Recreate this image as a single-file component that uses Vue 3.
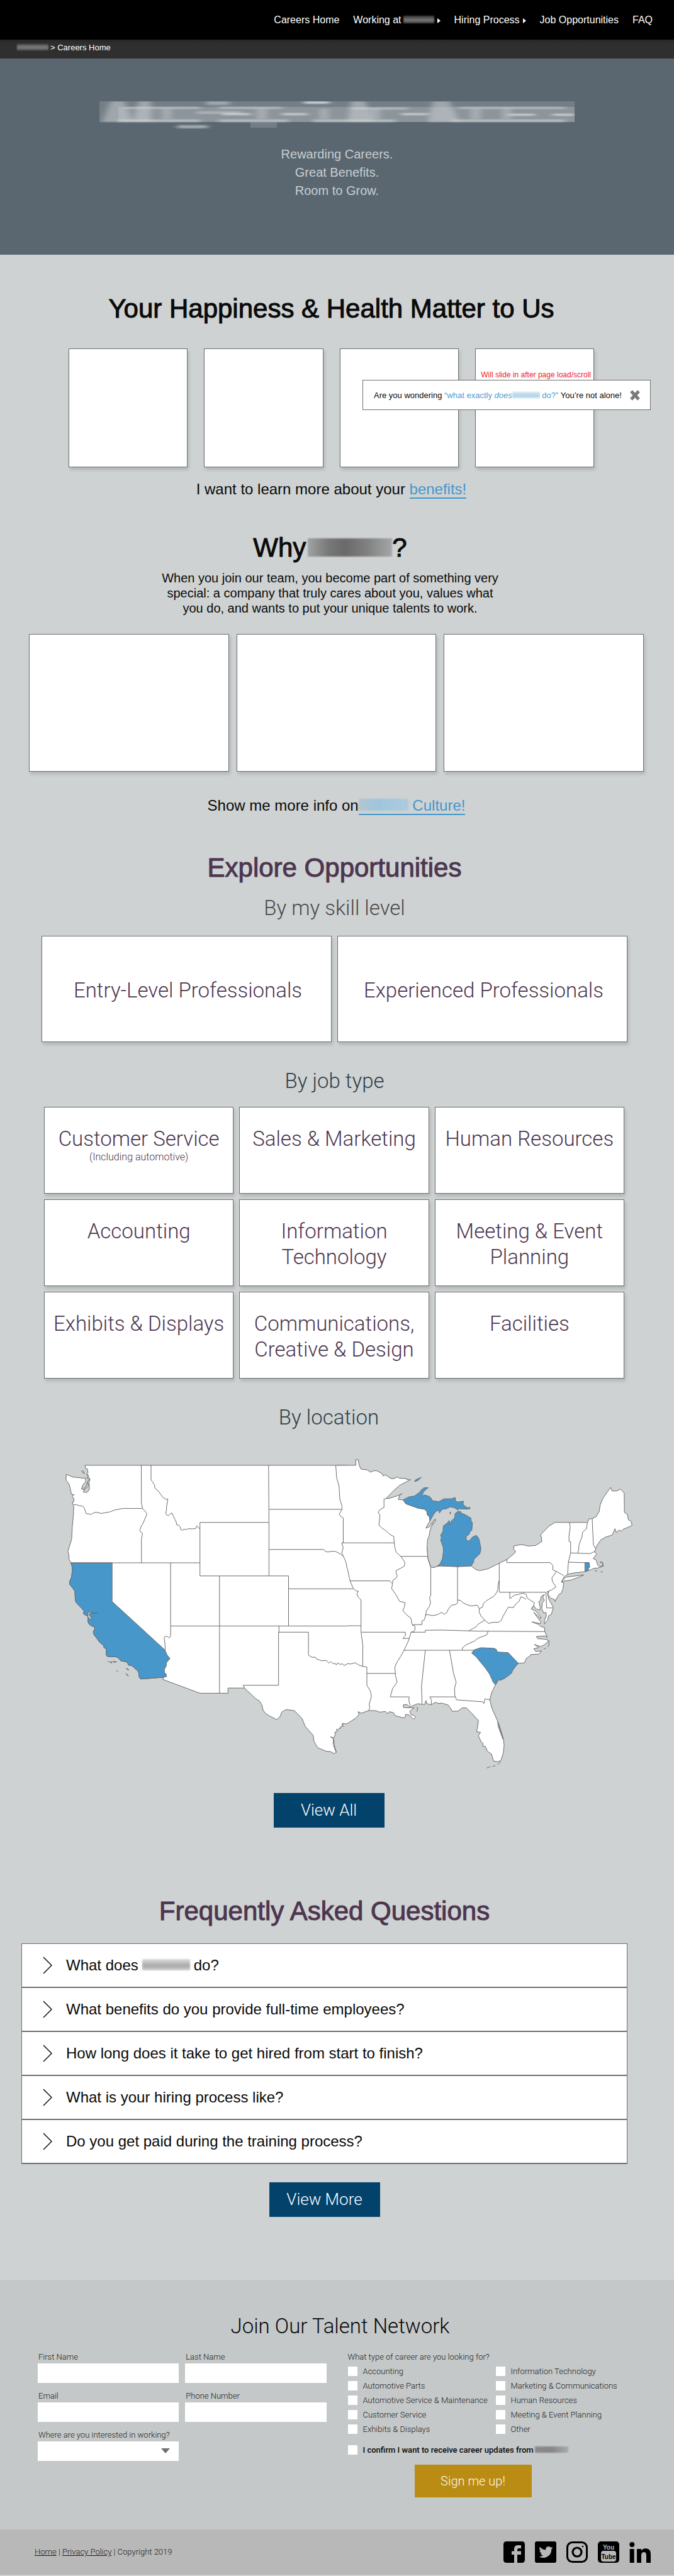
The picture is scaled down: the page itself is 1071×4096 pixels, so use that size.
<script setup>
const skillLevels = ['Entry-Level Professionals', 'Experienced Professionals']

const jobTypes = [
  { lines: ['Customer Service'], note: '(Including automotive)' },
  { lines: ['Sales & Marketing'] },
  { lines: ['Human Resources'] },
  { lines: ['Accounting'] },
  { lines: ['Information', 'Technology'] },
  { lines: ['Meeting & Event', 'Planning'] },
  { lines: ['Exhibits & Displays'] },
  { lines: ['Communications,', 'Creative & Design'] },
  { lines: ['Facilities'] },
]

const questions = [
  { before: 'What does', after: 'do?', redacted: true },
  { before: 'What benefits do you provide full-time employees?' },
  { before: 'How long does it take to get hired from start to finish?' },
  { before: 'What is your hiring process like?' },
  { before: 'Do you get paid during the training process?' },
]

const careers = [
  'Accounting', 'Automotive Parts', 'Automotive Service & Maintenance', 'Customer Service', 'Exhibits & Displays',
  'Information Technology', 'Marketing & Communications', 'Human Resources', 'Meeting & Event Planning', 'Other',
]

// State borders, western half of the map
const westBorders = [
  'M111 294L125 294 140 299 158 301 168 312 177 336 205 339 220 331 235 330 258 335 303 328 325 320 370 312 477 312',
  'M470 111L471 287 477 312 500 335 495 350 477 385 470 395 462 414 465 420 477 428 471 452V565',
  'M522 111V179L541 203 542 217 560 230 572 245 586 261 600 269 611 268 603 316 606 322 601 325 601 338 614 346 625 336 633 333 641 347 648 362 656 375 658 387 670 391 677 397 680 410 687 414 695 409 712 410 718 406 745 407 760 405 765 393 772 398 782 409',
  'M96 565H782',
  'M782 377H1149V626H782Z',
  'M1147 111L1149 377',
  'M1150 316H1537',
  'M1150 503H1440L1448 511 1462 515 1475 512 1500 511 1530 524 1543 535',
  'M626 565V907L618 915 608 907 596 908 592 914 597 950 597 975',
  'M626 859H1568',
  'M886 626V1172',
  'M1149 626H1253V858',
  'M1253 686H1568',
  'M1202 859V888',
  'M1359 888H1200V1135H1011L1020 1148',
  'M1359 888V995L1378 1005 1395 1004 1402 1013 1432 1021 1452 1019 1460 1024 1468 1032 1478 1025 1490 1035 1500 1032 1507 1041 1515 1030 1524 1037 1540 1036 1549 1043 1568 1034',
  'M1504 111L1509 170 1521 205 1526 270 1537 300 1537 318 1522 338 1530 348 1544 356V471L1536 474 1540 486 1544 492 1536 520 1545 535 1555 555 1560 568 1564 590 1568 597',
]

// State borders, eastern half of the map
const eastBorders = [
  'M22 472H283',
  'M242 266L232 268V307L212 317 203 330 212 343 207 390 222 403 240 415 262 433 280 442 285 490 292 515 315 535 336 563 333 580 314 591 293 600 291 610 298 625 292 636 277 645 270 685 290 712 310 745 337 750 332 775 325 787 345 808 365 822 372 853 385 858 386 875 380 885 366 888 355 925 340 955 330 975 315 1000 295 1030 286 1050 289 1090 297 1120 275 1150 263 1189H357L355 1205 362 1230',
  'M315 535H450',
  'M62 649H260L272 660',
  'M52 597L60 635 66 655 80 685 92 695 105 697 97 710 105 725 118 738V888L127 950 126 1047 147 1050V1135L163 1160 170 1185 158 1225 162 1240 155 1253',
  'M52 686H80',
  'M52 858H118',
  'M52 1034L65 1036 90 1030 105 1040 126 1047',
  'M120 888H338L338 905 325 917H357',
  'M147 1080H288',
  'M464 585V720L458 725 463 750 457 768 442 790 437 815 433 830 420 835 420 853 388 852 372 856',
  'M437 808L452 806 470 811 490 808 505 803 518 795 530 805 543 797 552 780 567 762 585 760 597 752',
  'M597 582V752',
  'M597 738L612 740 625 752 650 762 665 766 695 762 705 778 720 772 725 755 740 742 760 730 775 722 790 705 797 690 798 670 802 650 804 650',
  'M804 566V702H1036',
  'M705 778L704 795 715 815 732 832 750 847 775 842 800 842 815 832 822 815 848 772 875 773 885 758 902 745 912 722 938 735',
  'M732 832L700 850 690 862 652 882',
  'M856 702V732L880 715 900 712 920 706 938 712 942 728 960 740 978 750 975 765 963 778',
  'M1036 702L1039 775H1070',
  'M1057 564L1070 578 1070 598 1088 605 1065 635 1068 652 1085 677 1062 692 1040 700',
  'M842 548V564H1057',
  'M1088 605L1124 625',
  'M1153 377L1156 400 1150 440 1150 465 1158 467 1158 519 1147 562 1143 618',
  'M1242 377L1236 407 1218 422 1214 445 1200 480 1198 505 1193 519',
  'M1265 360L1271 480 1280 497',
  'M1158 519L1255 522 1278 512',
  'M1147 562L1250 565',
  'M365 888H437V879L515 878 700 883 1030 885',
  'M330 972H680',
  'M749 883L742 900 722 908 700 915 680 930 650 942 635 950 622 960 620 971',
  'M437 972L418 1140 421 1222',
  'M557 972L577 1080 590 1120 582 1150 583 1180 592 1203 722 1212 728 1220 733 1198 757 1203',
  'M585 1189H459L468 1205 466 1226',
]
</script>

<template>
  <div class="page">
    <header class="topbar">
      <nav class="nav" aria-label="Main">
        <a href="#home">Careers Home</a>
        <a href="#working">Working at<span class="smudge smudge-nav"></span><i class="caret"></i></a>
        <a href="#hiring">Hiring Process<i class="caret"></i></a>
        <a href="#jobs">Job Opportunities</a>
        <a href="#faq">FAQ</a>
      </nav>
    </header>
    <div class="crumbs"><span class="smudge smudge-crumb"></span>&gt; Careers Home</div>

    <section class="hero">
      <div class="hero-title" aria-hidden="true">
        <svg viewBox="0 0 755 44" preserveAspectRatio="none">
          <defs>
            <filter id="soft" x="-5%" y="-20%" width="110%" height="140%"><feGaussianBlur stdDeviation="5 1" /></filter>
          </defs>
          <rect width="755" height="33" fill="#a3a9b0" opacity=".35" />
          <rect x="30" y="9" width="725" height="24" fill="#b3b8bf" opacity=".4" />
          <g filter="url(#soft)" fill="#d4d7d9">
            <path d="M18 0h22l12 33H4zM62 0h20v33H54zM170 0h36v6h-36zM155 16h70v4h-70zM400 0h22l14 33h-42zM530 0h26l16 33h-50z" opacity=".45" />
            <path d="M40 9h120v3H40zM190 9h100v3H190zM400 10h90v3H400zM570 9h170v3H570zM30 29h130v4H30zM190 29h110v4H190zM340 29h130v4H340zM560 29h180v4H560z" opacity=".6" />
            <path d="M325 0h40v4h-40zM195 19h45v3h-45zM290 19h40v3h-40zM480 19h42v3h-42zM650 20h42v3h-42zM720 20h35v3h-35z" opacity=".9" />
            <path d="M124 38h48v5h-48z" opacity=".6" />
            <path d="M100 12h14v16h-14zM250 12h16v16h-16zM350 12h14v16h-14zM430 12h16v16h-16zM590 12h16v16h-16zM640 12h14v16h-14z" opacity=".35" />
          </g>
          <rect x="240" y="33" width="42" height="9" fill="#8b939b" opacity=".5" />
        </svg>
      </div>
      <p class="hero-copy">Rewarding Careers.<br />Great Benefits.<br />Room to Grow.</p>
    </section>

    <main>
      <section class="benefits">
        <h2>Your Happiness &amp; Health Matter to Us</h2>
        <div class="tiles">
          <div v-for="n in 4" :key="n" class="tile"></div>
          <aside class="slide-in">
            <p class="slide-note">Will slide in after page load/scroll</p>
            <div class="slide-box">
              <p>Are you wondering <a href="#what">“what exactly <em>does</em><span class="smudge smudge-slide"></span> do?”</a> You’re not alone!</p>
              <button type="button" class="close" aria-label="Close">
                <svg viewBox="0 0 18 17"><path d="M3 2L15 15M15 2L3 15" stroke="#7a7a7a" stroke-width="5" /></svg>
              </button>
            </div>
          </aside>
        </div>
        <p class="more">I want to learn more about your <a href="#benefits">benefits!</a></p>
      </section>

      <section class="culture">
        <div class="culture-intro">
          <h2>Why<span class="smudge smudge-why"></span>?</h2>
          <p>When you join our team, you become part of something very<br />special: a company that truly cares about you, values what<br />you do, and wants to put your unique talents to work.</p>
        </div>
        <div class="panels">
          <div v-for="n in 3" :key="n" class="panel"></div>
        </div>
        <p class="more">Show me more info on<a href="#culture"><span class="smudge smudge-culture"></span> Culture!</a></p>
      </section>

      <section class="explore">
        <h2 class="plum">Explore Opportunities</h2>
        <h3 class="grey">By my skill level</h3>
        <div class="levels">
          <a v-for="level in skillLevels" :key="level" href="#jobs" class="box">{{ level }}</a>
        </div>
        <h3>By job type</h3>
        <div class="jobs">
          <a v-for="job in jobTypes" :key="job.lines[0]" href="#jobs" class="box">
            <span v-for="line in job.lines" :key="line">{{ line }}</span>
            <small v-if="job.note">{{ job.note }}</small>
          </a>
        </div>
      </section>

      <section class="location">
        <h3>By location</h3>
        <svg class="map" viewBox="100 2740 1140 640" role="img" aria-label="Map of the United States with California, Michigan, South Carolina and Rhode Island highlighted">
          <g transform="translate(100 2740) scale(.357143 .408163)">
            <path class="land" d="M1568 111H170L175 126 184 128 187 147 180 152 190 165 197 177 192 190 195 220 188 232 178 238 160 234 170 226 152 221 158 205 175 185 171 170 157 171 147 169 107 166 71 153 70 180 87 200 99 245 113 248 102 255 111 265 112 280 104 283 106 293 111 299 109 345 103 400 100 455 92 477 80 512 86 530 86 550 96 565 103 585 103 605 99 632 90 650 89 665 104 681 117 697 118 722 122 748 150 774 166 790 162 802 187 815 187 840 192 850 207 860 219 861 223 872 215 885 218 899 235 918 249 935 270 950 272 960 284 966 284 995 290 1001 338 1003 352 1011 361 1021 395 1027 402 1041 420 1044 450 1067 457 1078 459 1098 467 1106 588 1098 585 1108 782 1172H931V1148H1020L1037 1164 1055 1177 1075 1195 1100 1210 1113 1230 1116 1247 1128 1264 1148 1276 1190 1295 1208 1281 1217 1260 1239 1248 1284 1253 1325 1290 1342 1327 1384 1368 1388 1395 1407 1425 1450 1441 1480 1445 1495 1453 1508 1447 1498 1420 1493 1385 1476 1375 1494 1380 1502 1362 1498 1354 1512 1350 1508 1340 1530 1335 1528 1326 1545 1325 1535 1310 1568 1312" />
            <path class="line" d="M176 152L190 158 180 170 198 178 182 188 192 205 180 215 165 225M150 140L160 136 168 148 156 146M184 190L176 210 158 222M1492 1385L1490 1410 1505 1445" />
            <path class="hit" d="M96 565H315V745L595 970 608 995 623 1010 604 1030 603 1045 593 1060 593 1075 604 1085 603 1095 588 1098 467 1106 459 1098 457 1078 450 1067 420 1044 402 1041 395 1027 361 1021 352 1011 338 1003 290 1001 284 995 284 966 272 960 270 950 249 935 235 918 218 899 215 885 223 872 219 861 207 860 192 850 187 840 187 815 162 802 166 790 150 774 122 748 118 722 117 697 104 681 89 665 90 650 99 632 103 605 103 585Z" />
            <path class="water" d="M187 796L195 794 205 798 237 799 194 802 193 808 200 815 208 832 196 826 186 816Z" />
            <path class="hit" d="M291 1025H299M303 1026L316 1027 310 1032ZM320 1024L340 1026 326 1028ZM390 1056L404 1062 400 1065ZM389 1080L402 1091 396 1090ZM337 1067L346 1070" />
          </g>
          <g transform="translate(640 2740) scale(.382653 .408163)">
            <path class="land" d="M0 111H92V85H104L108 108 117 128 150 133 165 143 180 137 195 136 222 149 227 160 240 156 258 168 272 174 290 170 297 165 308 171 345 173 345 178 364 178 310 204 283 226 242 266 260 264 282 258 302 252 322 243 310 250 303 270 327 272 340 290 400 310 435 316 446 328 446 340 457 350 460 370 450 385 440 404 458 397 470 378 488 362 480 375 467 395 458 425 456 440 448 458 446 490 450 545 463 583 475 587 495 582 510 579H664L690 598 710 601 748 593 802 568 845 548 880 520 885 512 875 500 877 486 915 480 950 487 985 484 1015 466 1013 445 1008 436 1020 424 1050 395 1080 377H1242L1250 360 1265 360 1285 350 1300 325 1305 295 1318 265 1356 214 1363 230 1385 231 1405 222 1424 240 1425 330 1440 340 1445 365 1458 372 1463 390 1450 397 1420 408 1410 418 1400 412 1385 424 1378 406 1365 435 1330 446 1308 458 1285 490 1278 515 1287 525 1270 545 1285 552 1292 575 1303 583 1318 578 1317 567 1303 562 1315 561 1321 580 1290 590 1275 590 1258 597 1228 606 1175 612 1145 618 1126 630 1112 655 1124 658 1119 690 1110 708 1100 712 1080 745 1077 735 1060 730 1045 712 1050 698 1043 705 1050 735 1068 765 1072 775 1062 805 1048 812 1045 830 1028 850 1028 835 1038 810 1035 795 1025 800 1015 778 1018 750 1028 740 1020 725 1028 712 1012 722 1008 740 1000 745 1007 770 1005 785 988 780 975 765 963 780 985 790 1008 815 1010 825 975 795 990 815 1010 840 1008 848 965 840 1000 852 1010 862 1028 865 1030 885 1042 912 1030 905 988 908 995 918 1025 920 1042 922 1046 930 1030 945 1010 955 978 945 1000 960 975 965 985 978 1015 975 1000 990 960 992 955 1000 938 1010 929 1031 898 1032 870 1065 865 1078 830 1103 800 1112 785 1133 768 1165 757 1200 765 1235 775 1258 802 1315 825 1385 828 1415 824 1450 812 1485 795 1491 776 1488 765 1455 745 1442 735 1420 722 1418 724 1405 715 1400 700 1370 711 1354 692 1352 694 1340 701 1300 665 1263 640 1240 620 1240 600 1255 570 1256 565 1245 550 1227 520 1218 500 1220 488 1214 465 1226 444 1220 440 1206 434 1225 400 1221 375 1230 360 1236 345 1224 328 1226 328 1238 350 1240 382 1240 360 1256 366 1272 380 1275 390 1285 378 1293 360 1275 340 1270 335 1288 300 1280 285 1275 280 1263 258 1258 250 1268 240 1257 210 1260 190 1253 155 1253 120 1265 103 1258 108 1270 95 1285 60 1308 45 1315 25 1312 25 1322 0 1345" />
            <path class="land" d="M1112 652L1135 632 1190 625 1224 621 1195 633 1160 645ZM470 388L485 362 488 372 476 386Z" />
            <path class="line" d="M1050 925L1051 945 1046 957M1036 962L1025 966M795 1305L800 1330 820 1380M798 1315L815 1360 822 1388M812 1490L795 1505M785 1510L770 1512M760 1514L742 1520M396 1236L399 1250 394 1258M1278 601L1290 604M1307 605L1318 609" />
            <path class="water open" d="M464 560L464 585 475 587 495 582 510 570 522 545 527 510 525 490 513 460 490 480 450 480 446 490 450 545Z" />
            <path class="line" d="M446 490L450 545 463 583 475 587 495 582" />
            <path class="hit" d="M327 272L356 258 383 254 412 234 414 228 430 216 452 215 440 224 428 235 419 256 432 249 455 255 464 262 473 276 505 280 530 267 565 267 586 261 586 277 600 282 627 278 624 290 631 300 650 310 657 305 659 313 640 315 598 313 600 320 580 308 560 305 540 314 520 316 507 333 505 320 490 325 478 340 460 370 457 350 446 340 446 328 435 316 400 310 340 290Z" />
            <path class="hit" d="M497 579L510 570 522 545 527 510 525 490 513 460 517 448 513 436 524 420 527 393 545 380 556 368 560 388 566 370 583 355 585 335 600 325 620 335 637 342 664 357 664 368 671 380 668 412 657 423 655 432 640 443 640 457 650 464 660 458 670 446 690 437 702 450 708 475 713 500 708 522 679 548 676 562 664 580 597 583Z" />
            <path class="hit" d="M383 187L390 178 417 167 400 182ZM558 332L563 328 561 338ZM606 324L616 329" />
            <path class="hit" d="M667 985L680 970 713 960 780 963 791 970 793 980 848 983 899 1033 885 1045 870 1065 865 1078 850 1090 830 1103 810 1112 798 1107 792 1120 785 1133 773 1120 768 1108 755 1082 735 1055 700 1015 690 1003Z" />
            <path class="hit" d="M1229 564H1250L1253 585 1247 590 1245 602 1229 606Z" />
            <path v-for="d in eastBorders" :key="d" class="line" :d="d" />
          </g>
          <g transform="translate(100 2740) scale(.357143 .408163)">
            <path v-for="d in westBorders" :key="d" class="line" :d="d" />
          </g>
        </svg>
        <button type="button" class="btn">View All</button>
      </section>

      <section class="faq">
        <h2 class="plum">Frequently Asked Questions</h2>
        <ul>
          <li v-for="q in questions" :key="q.before">
            <button type="button" class="question">
              <svg viewBox="0 0 15 28"><path d="M1 1L14 14 1 27" fill="none" stroke="#111" stroke-width="1.5" /></svg>
              <span>{{ q.before }}<template v-if="q.redacted"><i class="smudge smudge-faq"></i>{{ q.after }}</template></span>
            </button>
          </li>
        </ul>
        <button type="button" class="btn">View More</button>
      </section>
    </main>

    <section class="talent">
      <h2>Join Our Talent Network</h2>
      <form class="form" @submit.prevent>
        <div class="fields">
          <div class="field"><label for="first">First Name</label><input id="first" type="text" /></div>
          <div class="field"><label for="last">Last Name</label><input id="last" type="text" /></div>
          <div class="field"><label for="email">Email</label><input id="email" type="email" /></div>
          <div class="field"><label for="phone">Phone Number</label><input id="phone" type="tel" /></div>
          <div class="field pick"><label for="where">Where are you interested in working?</label><select id="where"></select></div>
        </div>
        <div class="interests">
          <fieldset>
            <legend>What type of career are you looking for?</legend>
            <div class="checks">
              <label v-for="c in careers" :key="c"><input type="checkbox" />{{ c }}</label>
            </div>
          </fieldset>
          <label class="confirm"><input type="checkbox" /><span>I confirm I want to receive career updates from<i class="smudge smudge-confirm"></i></span></label>
          <button type="submit" class="signup">Sign me up!</button>
        </div>
      </form>
    </section>

    <footer class="footer">
      <p><a href="#home">Home</a> | <a href="#privacy">Privacy Policy</a> | Copyright 2019</p>
      <div class="social">
        <a href="#facebook" aria-label="Facebook">
          <svg viewBox="0 0 34 34"><path fill-rule="evenodd" d="M5 0H29Q34 0 34 5V29Q34 34 29 34H22V21H28V15.500H22V13Q22 11 24.500 11H28V6H23Q17 6 17 12V15.500H13V21H17V34H5Q0 34 0 29V5Q0 0 5 0Z" /></svg>
        </a>
        <a href="#twitter" aria-label="Twitter">
          <svg viewBox="0 0 34 34"><rect width="34" height="34" rx="3" /><path fill="#b8b8b8" d="M28.500 10.200a9 9 0 0 1-2.600.7 4.500 4.500 0 0 0 2-2.500 9 9 0 0 1-2.900 1.100 4.500 4.500 0 0 0-7.700 4.100A12.900 12.900 0 0 1 8 8.800a4.500 4.500 0 0 0 1.400 6.100 4.500 4.500 0 0 1-2-.6c0 2.200 1.500 4.100 3.600 4.500a4.500 4.500 0 0 1-2 .1 4.500 4.500 0 0 0 4.200 3.200 9.100 9.100 0 0 1-6.700 1.800A12.800 12.800 0 0 0 26.200 12.500a9 9 0 0 0 2.300-2.300z" /></svg>
        </a>
        <a href="#instagram" aria-label="Instagram">
          <svg viewBox="0 0 34 34"><rect x="1.500" y="1.500" width="31" height="31" rx="8" fill="none" stroke="#000" stroke-width="3" /><circle cx="17" cy="17" r="7" fill="none" stroke="#000" stroke-width="3.200" /><circle cx="26" cy="8" r="1.300" /></svg>
        </a>
        <a href="#youtube" aria-label="YouTube">
          <svg viewBox="0 0 34 34"><rect width="34" height="34" rx="5" /><rect x="5" y="15" width="24" height="17" rx="4" fill="#b8b8b8" /><text x="17" y="13" class="yt" fill="#b8b8b8">You</text><text x="17" y="28" class="yt">Tube</text></svg>
        </a>
        <a href="#linkedin" aria-label="LinkedIn">
          <svg viewBox="0 0 34 34"><circle cx="4.300" cy="5" r="4" /><path d="M.7 12h7v22h-7zM12 12h7v3c1-2 3.500-3.700 7-3.700 6.500 0 8 4.200 8 10V34h-7V23c0-3-.3-6-3.800-6S19 19.800 19 23v11h-7z" /></svg>
        </a>
      </div>
    </footer>
  </div>
</template>

<style>
body {
  margin: 0;
  background: #ced2d3;
}
</style>

<style scoped>
.page {
  font-family: "Liberation Sans", Arial, sans-serif;
  color: #0a0a0a;
  background: #ced2d3;
}
.page * {
  box-sizing: border-box;
}
h2, h3, p, ul, fieldset {
  margin: 0;
  padding: 0;
}
button, input, select {
  font-family: inherit;
  border: 0;
  padding: 0;
  border-radius: 0;
}
a {
  color: inherit;
  text-decoration: none;
}

/* Smeared, redacted company name */
.smudge {
  display: inline-block;
  vertical-align: baseline;
  filter: blur(1px);
}
.smudge-nav {
  width: 49px;
  height: 12px;
  margin-left: 3px;
  background: linear-gradient(#333, #666 40%, #777 60%, #444);
}
.smudge-crumb {
  width: 50px;
  height: 10px;
  margin-right: 3px;
  background: linear-gradient(#4a4a4a, #777 40%, #777 60%, #555);
}
.smudge-slide {
  width: 44px;
  height: 10px;
  background: linear-gradient(#d6e8f4, #b4d5ea 60%, #c4def0);
}
.smudge-why {
  width: 134px;
  height: 29px;
  margin: 0 0 0 3px;
  background: linear-gradient(90deg, #a0a3a4, #777 25%, #6a6a6a 45%, #808080 70%, #a4a7a8);
}
.smudge-culture {
  width: 79px;
  height: 19px;
  background: linear-gradient(90deg, #b3c5d0, #9fc5dd 40%, #aecbdd);
}
.smudge-faq {
  width: 76px;
  height: 18px;
  margin: 0 6px;
  background: linear-gradient(#ddd, #b5b5b5 45%, #aaa 60%, #d0d0d0);
}
.smudge-confirm {
  width: 53px;
  height: 10px;
  margin-left: 2px;
  background: linear-gradient(90deg, #8a8a8a, #868686 50%, #a8abac);
}

.topbar {
  display: flex;
  justify-content: flex-end;
  align-items: center;
  height: 63px;
  padding-right: 34px;
  background: #000;
}
.nav {
  display: flex;
  gap: 22px;
  font-size: 16px;
  line-height: 20px;
  color: #fff;
}
.caret {
  display: inline-block;
  margin-left: 5px;
  border: 4px solid transparent;
  border-left: 5px solid #fff;
  border-right: 0;
}
.crumbs {
  height: 30px;
  padding: 5px 27px 0;
  font-size: 13px;
  line-height: 16px;
  color: #fff;
  background: linear-gradient(#262626, #2f2f2f 6px);
}
.hero {
  padding: 68px 158px 87px;
  text-align: center;
  background: #5a6770;
}
.hero-title {
  height: 44px;
}
.hero-title svg {
  display: block;
  width: 100%;
  height: 44px;
}
.hero-copy {
  margin-top: 26px;
  font-size: 20px;
  line-height: 29px;
  color: #c9cdd0;
}

h2 {
  font-size: 42px;
  line-height: 48px;
  font-weight: 400;
  text-align: center;
  -webkit-text-stroke: 1px currentColor;
}
h3 {
  font-family: Roboto, "Liberation Sans", sans-serif;
  font-size: 33px;
  line-height: 40px;
  font-weight: 300;
  text-align: center;
  color: #2f3f4a;
}
.plum {
  color: #4d364f;
}
.grey {
  color: #4a4a4a;
}
.more {
  font-size: 24px;
  line-height: 30px;
  text-align: center;
}
.more a {
  color: #4797cb;
  border-bottom: 2px solid #4797cb;
}
.tile, .panel, .box {
  background: #fff;
  border: 1px solid #6f6f6f;
  box-shadow: 2px 4px 5px rgba(0, 0, 0, 0.14);
}

.benefits {
  padding: 62px 127px 0 109px;
}
.benefits h2 {
  white-space: nowrap;
}
.tiles {
  position: relative;
  display: grid;
  grid-template-columns: repeat(4, 1fr);
  gap: 26px;
  margin: 39px 0 20px;
}
.tile {
  aspect-ratio: 1;
}
.slide-in {
  position: absolute;
  top: 34px;
  right: -90px;
  width: 458px;
}
.slide-note {
  padding-right: 95px;
  font-size: 12px;
  line-height: 16px;
  text-align: right;
  color: #f01c1c;
}
.slide-box {
  display: flex;
  align-items: center;
  justify-content: space-between;
  height: 48px;
  padding: 0 15px 0 17px;
  font-size: 13px;
  white-space: nowrap;
  background: #fff;
  border: 1px solid #6f6f6f;
}
.slide-box a {
  color: #4f9dcf;
}
.close {
  width: 18px;
  height: 17px;
  background: none;
}
.close svg {
  display: block;
}

.culture {
  padding: 54px 48px 0 46px;
}
.culture-intro {
  padding-right: 20px;
  text-align: center;
}
.culture-intro p {
  margin-top: 12px;
  font-size: 20px;
  line-height: 24px;
}
.panels {
  display: grid;
  grid-template-columns: repeat(3, 1fr);
  gap: 12px;
  margin: 29px 0 39px;
}
.panel {
  height: 219px;
}

.explore {
  padding: 60px 74px 0 66px;
}
.explore h3 {
  margin-top: 20px;
}
.levels {
  display: grid;
  grid-template-columns: 1fr 1fr;
  gap: 9px;
  margin: 24px 0 42px;
}
.box {
  display: flex;
  flex-direction: column;
  align-items: center;
  font-family: Roboto, "Liberation Sans", sans-serif;
  font-size: 33px;
  line-height: 41px;
  font-weight: 300;
  color: #4d364f;
}
.levels .box {
  justify-content: center;
  height: 169px;
  padding: 4px 0 0 4px;
}
.jobs {
  display: grid;
  grid-template-columns: repeat(3, 1fr);
  gap: 9px;
  padding: 0 5px 0 4px;
  margin-top: 21px;
}
.jobs .box {
  height: 138px;
  padding-top: 29px;
}
.jobs small {
  font-size: 16px;
  line-height: 18px;
}

.location {
  padding: 42px 33px 0 84px;
  text-align: center;
}
.location h3, .location .btn {
  margin-right: 77px;
}
.map {
  display: block;
  width: 100%;
  margin: 18px 0 23px;
}
.map path {
  stroke: #6b6b6b;
  stroke-width: 1px;
  vector-effect: non-scaling-stroke;
  stroke-linejoin: round;
}
.map .open {
  stroke: none;
}
.land {
  fill: #fff;
}
.hit {
  fill: #4797cb;
}
.water {
  fill: #ced2d3;
}
.line {
  fill: none;
}
.btn {
  display: inline-block;
  width: 176px;
  height: 55px;
  font-family: Roboto, "Liberation Sans", sans-serif;
  font-size: 26px;
  font-weight: 300;
  color: #fff;
  background: #02426b;
}

.faq {
  padding: 109px 74px 100px 34px;
  text-align: center;
}
.faq ul {
  margin: 27px 0 29px;
  list-style: none;
  background: #fff;
  border: 1px solid #6f6f6f;
  border-bottom: 0;
}
.faq li {
  border-bottom: 2px solid #6f6f6f;
}
.question {
  display: flex;
  align-items: center;
  gap: 22px;
  width: 100%;
  height: 68px;
  padding-left: 33px;
  font-size: 24px;
  text-align: left;
  color: #0a0a0a;
  background: none;
}
.question svg {
  width: 15px;
  height: 28px;
}

.talent {
  padding: 54px 60px 51px;
  font-family: Roboto, "Liberation Sans", sans-serif;
  font-weight: 300;
  background: #c4c8c9;
}
.talent h2 {
  padding-left: 10px;
  font-size: 33px;
  line-height: 40px;
  font-weight: 300;
  -webkit-text-stroke: 0;
}
.form {
  display: grid;
  grid-template-columns: 1fr 1fr;
  gap: 34px;
  margin-top: 21px;
  font-size: 13px;
  line-height: 16px;
  color: #222;
}
.fields {
  display: grid;
  grid-template-columns: 1fr 1fr;
  align-content: start;
  gap: 13px 10px;
}
.field {
  position: relative;
  display: grid;
  gap: 2px;
}
.field label {
  padding-left: 1px;
  white-space: nowrap;
}
.field input, .field select {
  width: 100%;
  height: 31px;
  background: #fff;
  appearance: none;
}
.pick::after {
  content: "";
  position: absolute;
  right: 14px;
  bottom: 12px;
  border: 7px solid transparent;
  border-top: 8px solid #6f6f6f;
  border-bottom: 0;
}
fieldset {
  min-width: 0;
  border: 0;
}
legend {
  padding: 0;
}
.checks {
  display: grid;
  grid-template-columns: 235px 1fr;
  grid-template-rows: repeat(5, 15px);
  grid-auto-flow: column;
  row-gap: 8px;
  padding-top: 7px;
}
.checks label, .confirm {
  display: flex;
  align-items: center;
  gap: 9px;
  line-height: 15px;
  white-space: nowrap;
}
input[type="checkbox"] {
  appearance: none;
  width: 15px;
  height: 15px;
  margin: 0;
  background: #fff;
}
.confirm {
  margin-top: 18px;
  font-size: 13px;
  font-weight: 500;
  color: #0a0a0a;
}
.signup {
  width: 186px;
  height: 52px;
  margin: 16px 0 0 106px;
  font-size: 20px;
  font-weight: 300;
  color: #fdf9ee;
  background: #ba8c14;
}

.footer {
  display: flex;
  align-items: center;
  justify-content: space-between;
  height: 72px;
  padding: 0 37px 0 55px;
  font-family: Roboto, "Liberation Sans", sans-serif;
  font-size: 13px;
  font-weight: 300;
  color: #1a1a1a;
  background: #b8b8b8;
}
.footer p a {
  text-decoration: underline;
}
.social {
  display: flex;
  gap: 16px;
}
.social svg {
  display: block;
  width: 34px;
  height: 34px;
}
.yt {
  font: 700 10px "Liberation Sans", Arial, sans-serif;
  text-anchor: middle;
}
</style>
